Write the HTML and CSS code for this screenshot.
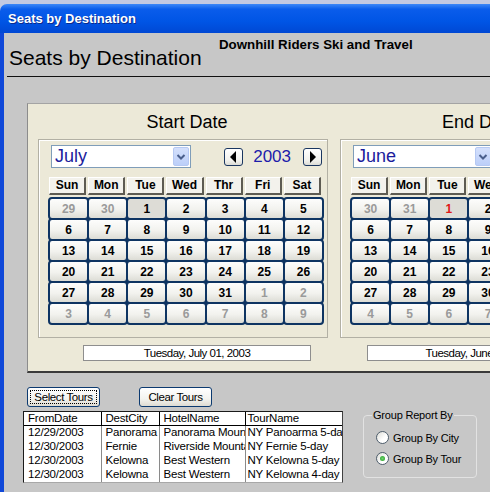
FILE: index.html
```html
<!DOCTYPE html>
<html lang="en">
<head>
<meta charset="UTF-8">
<title>Seats by Destination</title>
<link rel="stylesheet" href="styles.css">
<script type="text/javascript">
let init = () => {

    // builds one month of day buttons: leading days of the previous
    // month, the month itself, then trailing days of the next month
    let fillMonth = (root, lead, count, trail, selected, selectedClass) => {
        let add = (text, cls) => {
            const cell = document.createElement("div");
            cell.className = "day" + (cls ? " " + cls : "");
            cell.textContent = text;
            root.appendChild(cell);
        };
        lead.forEach(d => add(d, "other"));
        for (let d = 1; d <= count; d++)
            add(d, d === selected ? selectedClass : "");
        for (let d = 1; d <= trail; d++)
            add(d, "other");
    };

    fillMonth(document.getElementById("start-days"), [29, 30], 31, 9, 1, "selected");
    fillMonth(document.getElementById("end-days"), [30, 31], 30, 10, 1, "selected today");
};
addEventListener('DOMContentLoaded', init);
</script>
</head>
<body>
<div class="window">
    <div class="titlebar">Seats by Destination</div>
    <div class="client">
        <div class="head">
            <h1 class="heading">Seats by Destination</h1>
            <div class="company">Downhill Riders Ski and Travel</div>
        </div>
        <div class="rule"></div>

        <div class="panel">
            <div class="cal cal-start">
                <div class="cal-title">Start Date</div>
                <div class="cal-box">
                    <div class="cal-nav">
                        <div class="combo">
                            <span class="combo-text">July</span>
                            <span class="combo-btn"><svg width="14" height="17" viewBox="0 0 14 17"><polyline points="3.5,7 7,10.5 10.5,7" fill="none" stroke="#4a5f8c" stroke-width="2"/></svg></span>
                        </div>
                        <div class="year-nav">
                            <span class="nav-btn"><svg width="17" height="16" viewBox="0 0 17 16"><polygon points="11,2 11,14 5,8" fill="#000"/></svg></span>
                            <span class="year">2003</span>
                            <span class="nav-btn"><svg width="17" height="16" viewBox="0 0 17 16"><polygon points="6,2 6,14 12,8" fill="#000"/></svg></span>
                        </div>
                    </div>
                    <div class="weekdays">
                        <span>Sun</span><span>Mon</span><span>Tue</span><span>Wed</span><span>Thr</span><span>Fri</span><span>Sat</span>
                    </div>
                    <div class="days" id="start-days"></div>
                </div>
                <div class="date-field">Tuesday, July 01, 2003</div>
            </div>

            <div class="cal cal-end">
                <div class="cal-title">End Date</div>
                <div class="cal-box">
                    <div class="cal-nav">
                        <div class="combo">
                            <span class="combo-text">June</span>
                            <span class="combo-btn"><svg width="14" height="17" viewBox="0 0 14 17"><polyline points="3.5,7 7,10.5 10.5,7" fill="none" stroke="#4a5f8c" stroke-width="2"/></svg></span>
                        </div>
                        <div class="year-nav">
                            <span class="nav-btn"><svg width="17" height="16" viewBox="0 0 17 16"><polygon points="11,2 11,14 5,8" fill="#000"/></svg></span>
                            <span class="year">2003</span>
                            <span class="nav-btn"><svg width="17" height="16" viewBox="0 0 17 16"><polygon points="6,2 6,14 12,8" fill="#000"/></svg></span>
                        </div>
                    </div>
                    <div class="weekdays">
                        <span>Sun</span><span>Mon</span><span>Tue</span><span>Wed</span><span>Thr</span><span>Fri</span><span>Sat</span>
                    </div>
                    <div class="days" id="end-days"></div>
                </div>
                <div class="date-field">Tuesday, June 01, 2003</div>
            </div>
        </div>

        <div class="actions">
            <button class="btn focused">Select Tours</button>
            <button class="btn">Clear Tours</button>
        </div>

        <div class="lower">
            <div class="grid-wrap">
                <table class="tours">
                    <colgroup>
                        <col style="width: 77px">
                        <col style="width: 58px">
                        <col style="width: 86px">
                        <col>
                    </colgroup>
                    <thead>
                        <tr><th>FromDate</th><th>DestCity</th><th>HotelName</th><th>TourName</th></tr>
                    </thead>
                    <tbody>
                        <tr><td>12/29/2003</td><td>Panorama</td><td><span class="clip">Panorama Mountain Village</span></td><td>NY Panoarma 5-day</td></tr>
                        <tr><td>12/30/2003</td><td>Fernie</td><td><span class="clip">Riverside Mountain Lodge</span></td><td>NY Fernie 5-day</td></tr>
                        <tr><td>12/30/2003</td><td>Kelowna</td><td>Best Western</td><td>NY Kelowna 5-day</td></tr>
                        <tr><td>12/30/2003</td><td>Kelowna</td><td>Best Western</td><td>NY Kelowna 4-day</td></tr>
                    </tbody>
                </table>
            </div>

            <fieldset class="group">
                <legend>Group Report By</legend>
                <label class="radio"><span class="radio-mark"></span>Group By City</label>
                <label class="radio"><span class="radio-mark checked"></span>Group By Tour</label>
            </fieldset>
        </div>
    </div>
</div>
</body>
</html>
```

FILE: styles.css
```css
* {
    margin: 0;
    padding: 0;
    box-sizing: border-box;
}
html, body {
    width: 490px;
    height: 492px;
    overflow: hidden;
}
body {
    background-color: #c3c9e2;
    font-family: "Liberation Sans", Arial, sans-serif;
    color: #000;
}

/* window frame */
.window {
    margin-top: 4px;
    height: 488px;
}
.titlebar {
    height: 29px;
    padding: 1px 0 0 8px;
    line-height: 28px;
    border-radius: 7px 0 0 0;
    background: linear-gradient(#3d87f7, #0a5ceb 18%, #0055e5 60%, #0048d4);
    color: #fff;
    font-size: 13px;
    font-weight: bold;
    text-shadow: 1px 1px #0b2a8c;
}
.client {
    height: 459px;
    border-left: 4px solid #1048d8;
    background-color: #c7c7c7;
    overflow: hidden;
}

/* form header */
.head {
    display: flex;
    height: 43px;
    padding: 4px 0 0 5px;
}
.heading {
    width: 210px;
    margin-top: 9px;
    font-size: 21px;
    font-weight: normal;
    line-height: 24px;
}
.company {
    font-size: 13.3px;
    font-weight: bold;
    line-height: 15px;
}
.rule {
    margin-left: 3px;
    border-top: 1px solid #111;
}

/* calendar panel */
.panel {
    display: flex;
    gap: 12px;
    width: 680px;
    height: 270px;
    margin: 26px 0 0 23px;
    padding: 8px 0 0 10px;
    background-color: #ece9d8;
    border-top: 1px solid #a4a4a4;
    border-left: 1px solid #8c8c8c;
    border-bottom: 2px solid #3a3a3a;
}
.cal {
    flex: 0 0 290px;
    width: 290px;
}
.cal-title {
    height: 21px;
    margin-bottom: 6px;
    padding-left: 8px;
    font-size: 18px;
    line-height: 21px;
    text-align: center;
}
.cal-end .cal-title {
    padding: 0 11px 0 0;
}
.cal-box {
    padding: 5px 4px 13px 10px;
    border: 1px solid #b2b0a4;
    box-shadow: inset 1px 1px #fff;
}

/* month combo and year stepper */
.cal-nav {
    display: flex;
    align-items: center;
    height: 23px;
}
.combo {
    display: flex;
    align-items: center;
    width: 140px;
    height: 23px;
    margin-left: 2px;
    padding: 1px;
    background-color: #fff;
    border: 1px solid #7f9db9;
}
.combo-text {
    flex: 1;
    padding-left: 2px;
    color: #1c1c9c;
    font-size: 18px;
    line-height: 19px;
}
.combo-btn {
    display: flex;
    width: 16px;
    height: 19px;
    align-items: center;
    justify-content: center;
    background: linear-gradient(#d4e0fc, #bccff9);
    border: 1px solid #b6c9f3;
    border-radius: 2px;
}
.year-nav {
    display: flex;
    align-items: center;
    margin: 0 1px 0 auto;
}
.nav-btn {
    display: flex;
    width: 19px;
    height: 18px;
    align-items: center;
    justify-content: center;
    background: linear-gradient(#fff, #f1f1ed 70%, #dcdcd6);
    border: 1px solid #1a3660;
    border-radius: 3px;
}
.year {
    margin: 0 12px 0 10px;
    color: #1c1cab;
    font-size: 17px;
    line-height: 20px;
}

/* weekday header and day buttons */
.weekdays, .days {
    display: grid;
    grid-template-columns: repeat(7, 1fr);
}
.weekdays {
    margin-top: 9px;
}
.weekdays span {
    height: 18px;
    margin-right: 2px;
    background-color: #f3f2ec;
    border-top: 1px solid #fff;
    border-left: 1px solid #fff;
    border-right: 2px solid #5d5b52;
    border-bottom: 2px solid #5d5b52;
    font-size: 12px;
    font-weight: bold;
    line-height: 15px;
    text-align: center;
}
.days {
    grid-template-rows: repeat(6, 21px);
    margin-top: 3px;
    background-color: #a9c0d6;
}
.day {
    margin: -1px;
    border: 2px solid #0e3462;
    border-radius: 4px;
    background: linear-gradient(#fdfdfc, #f2f2ee 55%, #dcdcd5);
    font-size: 12px;
    font-weight: bold;
    line-height: 20px;
    text-align: center;
}
.day.other {
    color: #9a9a9a;
}
.day.selected {
    background: #dddcd6;
}
.day.today {
    color: #e01818;
}

.date-field {
    width: 228px;
    height: 16px;
    margin: 7px 0 0 45px;
    background-color: #fff;
    border: 1px solid #8e8e8e;
    font-size: 11.5px;
    letter-spacing: -0.5px;
    line-height: 14px;
    text-align: center;
}
.cal-end .date-field {
    margin-left: 27px;
}

/* buttons */
.actions {
    display: flex;
    gap: 39px;
    margin: 14px 0 0 23px;
}
.btn {
    width: 73px;
    height: 20px;
    background: linear-gradient(#fff, #f3f3ef 60%, #dedbd2);
    border: 1px solid #0c3a70;
    border-radius: 3px;
    font-family: "Liberation Sans", Arial, sans-serif;
    font-size: 11.5px;
    letter-spacing: -0.4px;
    color: #000;
}
.btn.focused {
    outline: 1px dotted #000;
    outline-offset: -4px;
}

/* tours list */
.lower {
    display: flex;
    align-items: flex-start;
    margin: 4px 0 0 19px;
}
.grid-wrap {
    width: 320px;
    height: 72px;
    background-color: #fff;
    border-top: 1px solid #1a1a1a;
    border-left: 1px solid #1a1a1a;
    border-right: 1px solid #404040;
    border-bottom: 1px solid #a8a8a8;
    overflow: hidden;
}
.tours {
    width: 100%;
    table-layout: fixed;
    border-collapse: collapse;
    font-size: 11.5px;
    letter-spacing: -0.2px;
}
.tours th, .tours td {
    height: 14px;
    padding: 0 0 0 4px;
    overflow: hidden;
    white-space: nowrap;
    font-weight: normal;
    line-height: 13px;
    text-align: left;
}
.tours th {
    height: 13px;
    border-bottom: 1px solid #000;
    border-right: 1px solid #000;
}
.tours td {
    border-right: 1px solid #8a8a8a;
}
.tours th:last-child, .tours td:last-child {
    border-right: none;
    padding-left: 2px;
}
.tours .clip {
    display: block;
    overflow: hidden;
}

/* grouping options */
.group {
    width: 114px;
    height: 69px;
    margin: -2px 0 0 20px;
    padding: 9px 0 0 12px;
    border: 1px solid #e2e2e2;
    border-radius: 4px;
}
.group legend {
    margin-left: -4px;
    padding: 0 1px;
    font-size: 11px;
    letter-spacing: -0.2px;
    line-height: 13px;
}
.radio {
    display: flex;
    align-items: center;
    height: 13px;
    margin-bottom: 8px;
    font-size: 11px;
    letter-spacing: -0.2px;
}
.radio-mark {
    display: flex;
    width: 13px;
    height: 13px;
    margin-right: 4px;
    align-items: center;
    justify-content: center;
    border: 1px solid #4f5e6c;
    border-radius: 50%;
    background: linear-gradient(135deg, #dcdcd6, #fff 60%);
}
.radio-mark.checked::after {
    content: "";
    width: 5px;
    height: 5px;
    border-radius: 50%;
    background: radial-gradient(#6fd46f, #219b21);
}
```
